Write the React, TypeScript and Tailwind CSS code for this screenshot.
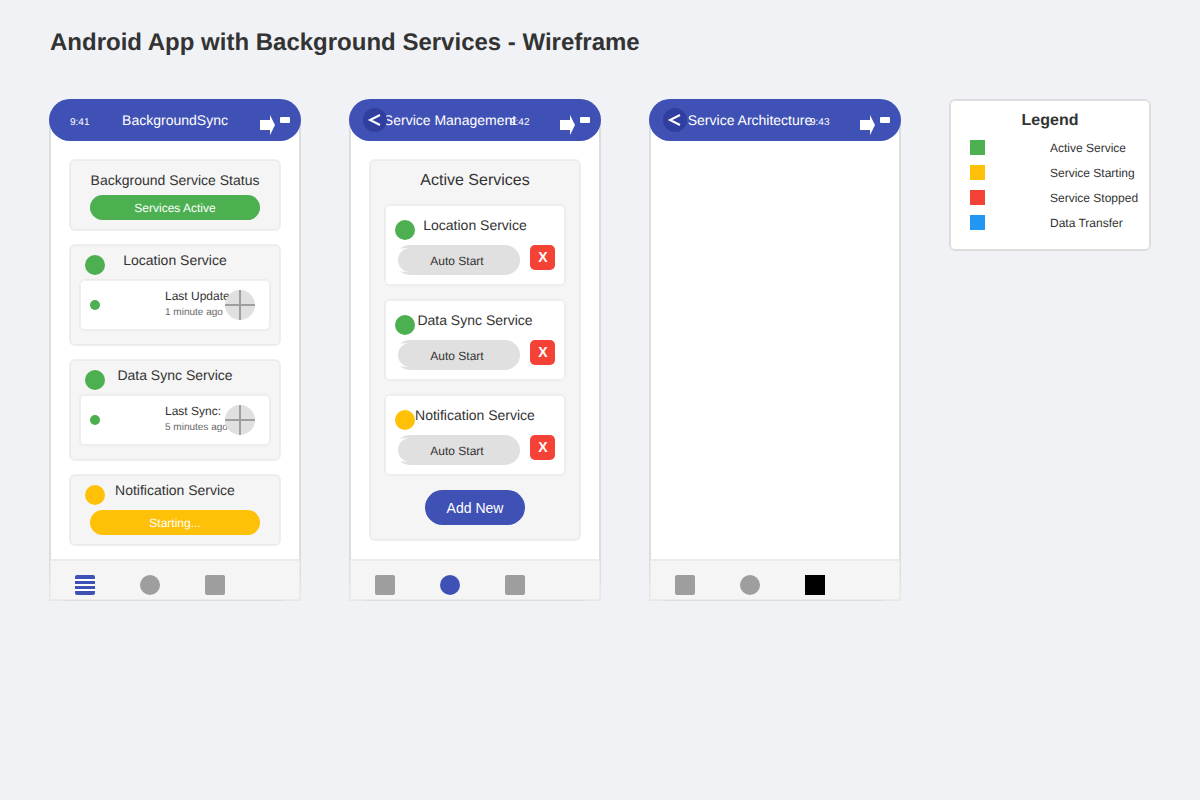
import type { ReactNode } from 'react';

const STACK = 'col-start-1 row-start-1';

function BackButton() {
  return (
    <svg className={`${STACK} ml-[13px] mt-2`} width="24" height="24" viewBox="0 0 24 24" fill="none">
      <circle cx="12" cy="12" r="12" fill="#303f9f" />
      <path d="M17 7L7 12L17 17" stroke="#fff" strokeWidth="2" />
    </svg>
  );
}

function StatusIcons() {
  return (
    <svg className={`${STACK} ml-[210px] mt-[15px]`} width="30" height="20" viewBox="0 0 30 20" fill="#fff">
      <path d="M0 5H10V0L15 10L10 20V15H0Z" />
      <rect x="20" y="2" width="10" height="6" rx="1" />
    </svg>
  );
}

type Tab = 'list' | 'services' | 'architecture' | 'none';

function TabBar({ active }: { active: Tab }) {
  return (
    <nav className="mt-auto flex h-10 items-start gap-[45px] bg-[#f5f5f5] pl-[25px] pt-[15px] shadow-[0_0_0_1px_rgba(224,224,224,0.6),inset_0_0_0_1px_#ebebeb]">
      {active === 'list' ? (
        <div className="flex h-5 w-5 flex-col justify-between overflow-hidden rounded-[2px] bg-white">
          <span className="h-1 bg-[#3f51b5]" />
          <span className="h-[3px] bg-[#3f51b5]" />
          <span className="h-[3px] bg-[#3f51b5]" />
          <span className="h-1 bg-[#3f51b5]" />
        </div>
      ) : (
        <div className="h-5 w-5 rounded-[2px] bg-[#9e9e9e]" />
      )}
      <div className={`h-5 w-5 rounded-full ${active === 'services' ? 'bg-[#3f51b5]' : 'bg-[#9e9e9e]'}`} />
      <div className={`h-5 w-5 ${active === 'architecture' ? 'bg-black' : 'rounded-[2px] bg-[#9e9e9e]'}`} />
    </nav>
  );
}

function Phone(props: { title: string; time: string; back?: boolean; tab: Tab; children?: ReactNode }) {
  return (
    <section className="flex h-[500px] w-[250px] flex-col rounded-[20px] bg-white shadow-[0_0_0_1px_#ddd,inset_0_0_0_1px_#ddd]">
      <header className="grid h-10 grid-cols-1 items-start rounded-[20px] bg-[#3f51b5] text-white shadow-[0_0_0_1px_#3f51b5]">
        <h2
          className={`${STACK} mt-3 whitespace-nowrap text-center text-[14px] leading-4 ${props.back ? 'pr-[50px]' : ''}`}
        >
          {props.title}
        </h2>
        {props.back && <BackButton />}
        <span className={`${STACK} mt-[17px] text-[10px] leading-[11px] ${props.back ? 'ml-[160px]' : 'ml-5'}`}>
          {props.time}
        </span>
        <StatusIcons />
      </header>
      {props.children}
      <TabBar active={props.tab} />
    </section>
  );
}

const PANEL = 'rounded-[5px] bg-[#f5f5f5] shadow-[0_0_0_1px_#efefef,inset_0_0_0_1px_#ebebeb]';
const INNER = 'rounded-[5px] bg-white shadow-[0_0_0_1px_#ebebeb,inset_0_0_0_1px_#efefef]';

function Pill({ label, color }: { label: string; color: string }) {
  return (
    <div className={`mx-5 h-[25px] rounded-full pt-[6px] text-center text-[12px] leading-[14px] text-white ${color}`}>
      {label}
    </div>
  );
}

function TitleRow({ name, color, className }: { name: string; color: string; className: string }) {
  return (
    <div className={`grid grid-cols-1 items-start ${className}`}>
      <h3 className={`${STACK} whitespace-nowrap text-center text-[14px] leading-4`}>{name}</h3>
      <span className={`${STACK} mt-[3px] h-5 w-5 rounded-full ${color}`} />
    </div>
  );
}

function StatusCard({ name, label, ago }: { name: string; label: string; ago: string }) {
  return (
    <article className={`${PANEL} h-[100px] pt-[7px]`}>
      <TitleRow name={name} color="ml-[15px] bg-[#4caf50]" className="h-7" />
      <div className={`${INNER} mx-[10px] grid h-[50px] grid-cols-1 items-start`}>
        <span className={`${STACK} ml-[10px] mt-5 h-[10px] w-[10px] rounded-full bg-[#4caf50]`} />
        <div className={`${STACK} ml-[85px] mt-[9px] whitespace-nowrap`}>
          <p className="text-[12px] leading-[14px]">{label}</p>
          <p className="mt-1 text-[10px] leading-[11px] text-[#666]">{ago}</p>
        </div>
        <svg className={`${STACK} ml-[145px] mt-[10px]`} width="30" height="30" viewBox="0 0 30 30">
          <circle cx="15" cy="15" r="15" fill="#e0e0e0" />
          <path d="M15 0V30M0 15H30" stroke="#9e9e9e" strokeWidth="2" />
        </svg>
      </div>
    </article>
  );
}

function AutoStart() {
  return (
    <div className="grid h-[30px] w-[125px] grid-cols-1 items-start">
      <svg className={STACK} width="125" height="30" viewBox="0 0 125 30">
        <rect width="125" height="30" rx="15" fill="#e0e0e0" />
        <path d="M0 4.2Q6 3.2 14 3V27Q6 26.8 0 25.8Z" fill="#fff" />
        <circle cx="15" cy="15" r="12" fill="#e0e0e0" />
      </svg>
      <span className={`${STACK} mt-[9px] pr-px text-center text-[12px] leading-[14px]`}>Auto Start</span>
    </div>
  );
}

function ServiceItem({ name, color }: { name: string; color: string }) {
  return (
    <article className={`${INNER} h-20 pt-3`}>
      <TitleRow name={name} color={color} className="h-7" />
      <div className="flex items-start gap-[10px] pl-[10px]">
        <AutoStart />
        <button className="h-[25px] w-[25px] rounded-[5px] bg-[#f44336] pb-[5px] pl-px pt-1 text-center text-[14px] font-bold leading-4 text-white">
          X
        </button>
      </div>
    </article>
  );
}

const LEGEND = [
  { label: 'Active Service', color: 'bg-[#4caf50]' },
  { label: 'Service Starting', color: 'bg-[#ffc107]' },
  { label: 'Service Stopped', color: 'bg-[#f44336]' },
  { label: 'Data Transfer', color: 'bg-[#2196f3]' },
];

export default function App() {
  return (
    <main className="h-[800px] w-[1200px] overflow-hidden bg-[#f0f2f5] pl-[50px] pt-[29px] font-['Liberation_Sans',Arial,sans-serif] text-[#333] [text-rendering:geometricPrecision]">
      <h1 className="text-[24px] font-bold leading-[27px]">Android App with Background Services - Wireframe</h1>
      <div className="mt-11 flex items-start gap-[50px]">
        <Phone title="BackgroundSync" time="9:41" tab="list">
          <div className="mx-5 mt-5 flex flex-col gap-[15px]">
            <article className={`${PANEL} h-[70px] pt-3`}>
              <h3 className="mb-[7px] text-center text-[14px] leading-4">Background Service Status</h3>
              <Pill label="Services Active" color="bg-[#4caf50]" />
            </article>
            <StatusCard name="Location Service" label="Last Update:" ago="1 minute ago" />
            <StatusCard name="Data Sync Service" label="Last Sync:" ago="5 minutes ago" />
            <article className={`${PANEL} h-[70px] pt-[7px]`}>
              <TitleRow name="Notification Service" color="ml-[15px] bg-[#ffc107]" className="h-7" />
              <Pill label="Starting..." color="bg-[#ffc107]" />
            </article>
          </div>
        </Phone>
        <Phone title="Service Management" time="9:42" back tab="services">
          <div className={`${PANEL} mx-5 mt-5 flex h-[380px] flex-col px-[15px] pt-3`}>
            <h3 className="mb-4 text-center text-[16px] leading-[17px]">Active Services</h3>
            <div className="flex flex-col gap-[15px]">
              <ServiceItem name="Location Service" color="ml-[10px] bg-[#4caf50]" />
              <ServiceItem name="Data Sync Service" color="ml-[10px] bg-[#4caf50]" />
              <ServiceItem name="Notification Service" color="ml-[10px] bg-[#ffc107]" />
            </div>
            <button className="mt-[15px] h-[35px] w-[100px] self-center rounded-full bg-[#3f51b5] text-[14px] leading-4 text-white">
              Add New
            </button>
          </div>
        </Phone>
        <Phone title="Service Architecture" time="9:43" back tab="architecture" />
        <aside className="h-[150px] w-[200px] rounded-[5px] bg-white pt-3 shadow-[0_0_0_1px_#ddd,inset_0_0_0_1px_#ddd]">
          <h2 className="mb-[11px] text-center text-[16px] font-bold leading-[17px]">Legend</h2>
          <ul className="flex flex-col gap-[10px] pl-5">
            {LEGEND.map((item) => (
              <li key={item.label} className="flex h-[15px] items-start gap-[65px]">
                <span className={`h-[15px] w-[15px] shrink-0 ${item.color}`} />
                <span className="mt-px whitespace-nowrap text-[12px] leading-[14px]">{item.label}</span>
              </li>
            ))}
          </ul>
        </aside>
      </div>
    </main>
  );
}
